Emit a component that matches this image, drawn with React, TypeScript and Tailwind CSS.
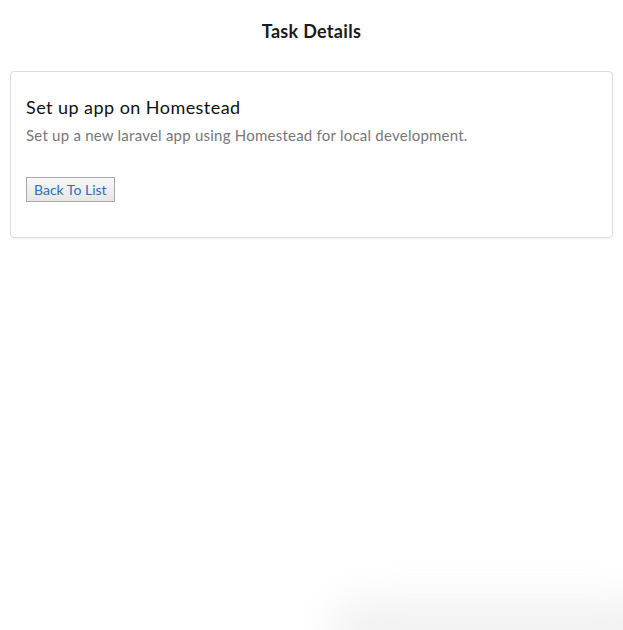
export default function App() {
  return (
    <div className="relative w-[623px] h-[630px] bg-white overflow-hidden" style={{ fontFamily: "Lato, 'Noto Sans', sans-serif" }}>
      <div className="pt-[19px] px-[10px]">
        <h1 className="text-center text-[18px] tracking-[0.3px] font-bold text-[#1a1a1a] leading-[24px]">Task Details</h1>
        <div className="mt-[28px] border border-[#dcdcdc] rounded-[4px] px-[15px] pt-[22px] pb-[35px] shadow-[0_1px_2px_rgba(0,0,0,0.05)]">
          <h2 className="text-[18px] tracking-[0.45px] text-[#111] leading-[26px]">Set up app on Homestead</h2>
          <p className="mt-[4px] text-[15px] tracking-[0.23px] text-[#777] leading-[22px]">Set up a new laravel app using Homestead for local development.</p>
          <button className="mt-[31px] h-[25px] px-[7px] border border-[#a9a9a9] bg-gradient-to-b from-[#f8f8f8] to-[#e6e6e6] text-[14px] text-[#2d6fb5] leading-[22px]">Back To List</button>
        </div>
      </div>
      <div className="absolute left-[330px] right-[-40px] bottom-[-40px] h-[70px] rounded-[40px] bg-[#e8e8e8] blur-[20px] opacity-60" />
    </div>
  );
}
